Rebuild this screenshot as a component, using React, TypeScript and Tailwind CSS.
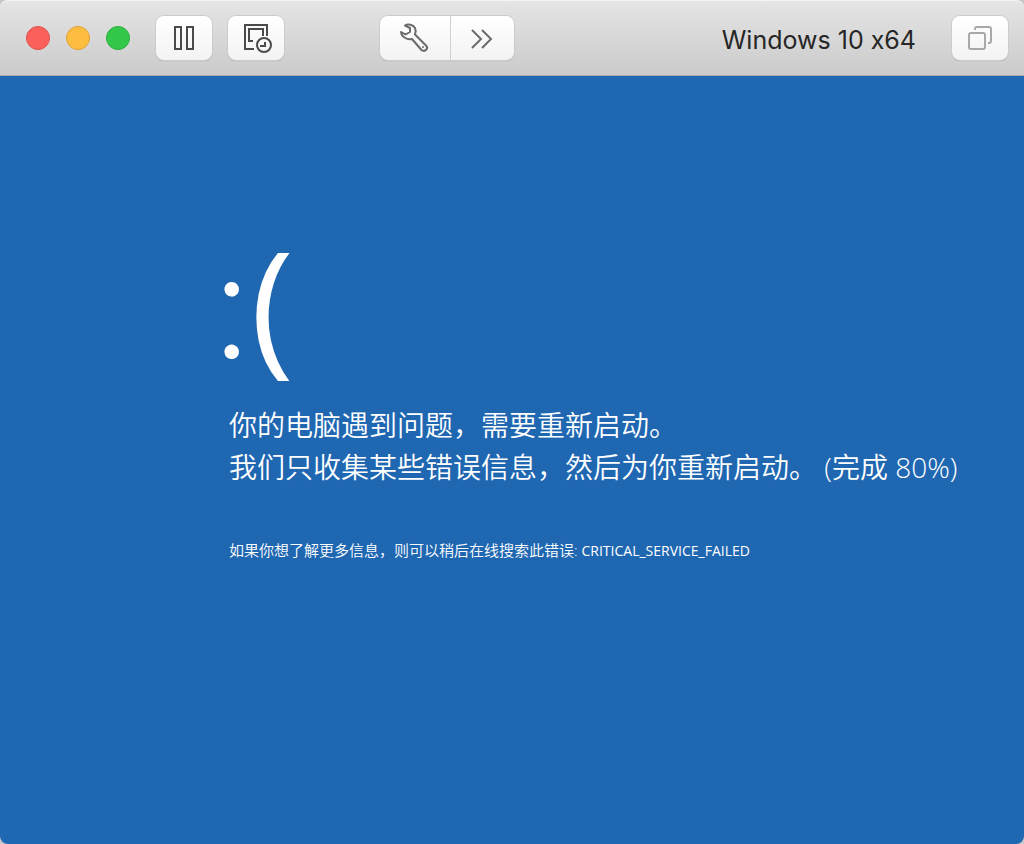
import type { ReactNode } from "react";

const BUTTON =
  "flex h-11 items-center justify-center bg-linear-to-b from-white to-[#f3f3f3]";
const FRAME =
  "rounded-lg shadow-[0_0_0_1px_#cccccc,0_1px_1px_#9c9c9c]";

const LIGHTS = [
  { label: "Close", color: "border-[#e0514d] bg-[#fc605b]" },
  { label: "Minimize", color: "border-[#dfa336] bg-[#fdbd40]" },
  { label: "Zoom", color: "border-[#2aae3c] bg-[#34c84a]" },
];

function ToolButton({
  label,
  className,
  children,
}: {
  label: string;
  className: string;
  children: ReactNode;
}) {
  return (
    <button type="button" aria-label={label} className={`${BUTTON} ${className}`}>
      {children}
    </button>
  );
}

function PauseIcon() {
  return (
    <svg width="32" height="32" fill="none" stroke="#4a4a4a" strokeWidth="2">
      <path d="M7 5h6v22H7zM19 5h6v22h-6z" />
    </svg>
  );
}

// Nested frames with a clock over the bottom right corner.
function SnapshotIcon() {
  return (
    <svg width="32" height="32" fill="none" stroke="#4a4a4a" strokeWidth="2">
      <path d="M14 27H5V3h22v11" />
      <path d="M13 19H9V7h14v7" />
      <circle cx="24" cy="23" r="7" />
      <path d="M25 20v4h-5" />
    </svg>
  );
}

function WrenchIcon() {
  return (
    <svg
      width="32"
      height="32"
      fill="none"
      stroke="#6b6b6b"
      strokeWidth="2"
      strokeLinejoin="round"
    >
      <path d="M6 3.500C9 1.500 14 2.500 16 6c1 2 1 4 0 6.500L27 23.500c3 3-1 7-4.500 4.500L13 17C8 18 2.500 15 2 10l4.500 2.500 4.500-2.500V6z" />
      <circle cx="24" cy="25" r="1" fill="#6b6b6b" stroke="none" />
    </svg>
  );
}

function MoreIcon() {
  return (
    <svg width="32" height="32" fill="none" stroke="#6b6b6b" strokeWidth="2">
      <path d="M5 8l9 9-9 9M15 8l9 9-9 9" />
    </svg>
  );
}

function WindowsIcon() {
  return (
    <svg width="32" height="32" fill="none" stroke="#a8a8a8" strokeWidth="2">
      <rect x="5" y="11" width="16" height="16" rx="2" />
      <path d="M11 8V7q0-2 2-2h12q2 0 2 2v12q0 2-2 2h-1" />
    </svg>
  );
}

function TitleBar() {
  return (
    <header className="flex h-19 shrink-0 items-center rounded-t-lg border-b border-[#a9a9a9] bg-linear-to-b from-[#e5e5e5] to-[#cbcbcb] pr-4 pl-6.5 shadow-[inset_0_1px_0_#f4f4f4]">
      <div className="flex gap-4">
        {LIGHTS.map((light) => (
          <button
            key={light.label}
            type="button"
            aria-label={light.label}
            className={`size-6 rounded-full border ${light.color}`}
          />
        ))}
      </div>
      <div className="ml-6.5 flex gap-4">
        <ToolButton label="Suspend" className={`w-14 ${FRAME}`}>
          <PauseIcon />
        </ToolButton>
        <ToolButton label="Snapshots" className={`w-14 ${FRAME}`}>
          <SnapshotIcon />
        </ToolButton>
      </div>
      <div className={`ml-24 flex overflow-hidden ${FRAME}`}>
        <ToolButton label="Settings" className="w-[71px] border-r border-[#d0d0d0]">
          <WrenchIcon />
        </ToolButton>
        <ToolButton label="More" className="w-[63px]">
          <MoreIcon />
        </ToolButton>
      </div>
      {/* calt off, otherwise Inter turns the x before 64 into a multiplication sign */}
      <h1 className="ml-auto pt-1 font-['Inter',sans-serif] text-[25px] leading-8 text-[#262626] [font-feature-settings:'calt'_0]">
        Windows 10 x64
      </h1>
      <ToolButton label="View" className={`ml-9 w-14 ${FRAME}`}>
        <WindowsIcon />
      </ToolButton>
    </header>
  );
}

export default function App() {
  return (
    <div className="flex min-h-screen flex-col bg-[#c8c8c8]">
      <TitleBar />
      <main className="flex-1 rounded-b-lg bg-[#2067b2] pt-36 pl-[229px] font-['Open_Sans','Noto_Sans_CJK_SC',sans-serif] text-white">
        <p className="-ml-4 h-40 text-[147px] leading-40">
          <span className="font-['Lato',sans-serif] text-[156px] leading-none font-light">:</span>(
        </p>
        <p className="mt-6 text-[28px] leading-[42px] font-[350]">
          你的电脑遇到问题，需要重新启动。
          <br />
          我们只收集某些错误信息，然后为你重新启动。{" "}
          <span className="font-light">(</span>完成{" "}
          <span className="font-light">80%)</span>
        </p>
        <p className="mt-12 text-[15px] leading-7 font-[350]">
          如果你想了解更多信息，则可以稍后在线搜索此错误:{" "}
          <span className="text-sm font-normal">CRITICAL_SERVICE_FAILED</span>
        </p>
      </main>
    </div>
  );
}
